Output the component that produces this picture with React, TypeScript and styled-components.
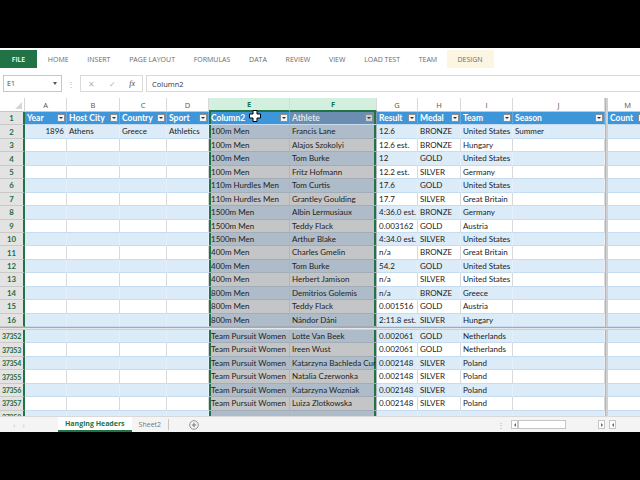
import React from 'react';
import styled, {createGlobalStyle} from 'styled-components';

const GREEN = '#217346';
const COLS = '25px 42px 53px 47px 42px 81px 87px 41px 43px 52px 92px 3px 40px';
const ROW_H = 13.45;

const GlobalStyle = createGlobalStyle`
    html, body {
        margin: 0;
        padding: 0;
        background: #000;
    }
    body {
        width: 640px;
        height: 480px;
        overflow: hidden;
        font-family: 'Lato', 'Open Sans', sans-serif;
    }
`;

const Screen = styled.div`
    width: 640px;
    height: 480px;
    display: flex;
    flex-direction: column;
    background: #000;
    overflow: hidden;
`;

const Letterbox = styled.div<{$h?: number}>`
    background: #000;
    flex: ${(p) => (p.$h ? `0 0 ${p.$h}px` : '1')};
`;

const Ribbon = styled.div`
    flex: 0 0 22px;
    background: #fff;
    display: flex;
    align-items: center;
    font-family: 'Open Sans', sans-serif;
    font-size: 7px;
    color: #6a6a6a;
`;

const RibbonTab = styled.div<{$file?: boolean, $context?: boolean}>`
    height: 18px;
    display: flex;
    align-items: center;
    justify-content: center;
    box-sizing: border-box;
    padding: 0 ${(p) => (p.$context ? 11 : 9.35)}px;
    width: ${(p) => (p.$file ? '37px' : 'auto')};
    background: ${(p) => (p.$file ? GREEN : p.$context ? '#fcf5e2' : 'transparent')};
    color: ${(p) => (p.$file ? '#fff' : '#6a6a6a')};
    font-weight: ${(p) => (p.$file ? 600 : 400)};
    margin-right: ${(p) => (p.$file ? '1.5px' : '0')};
`;

const FormulaRow = styled.div`
    flex: 0 0 28px;
    box-sizing: border-box;
    background: #fff;
    display: flex;
    align-items: flex-start;
    padding: 5px 0 0 3px;
    font-family: 'Open Sans', sans-serif;
    font-size: 7px;
    color: #444;
`;

const NameBox = styled.div`
    width: 59px;
    height: 17px;
    box-sizing: border-box;
    border: 1px solid #c6c6c6;
    display: flex;
    align-items: center;
    justify-content: space-between;
    padding: 0 4px 0 3px;
`;

const Caret = styled.span`
    width: 0;
    height: 0;
    border-left: 2.5px solid transparent;
    border-right: 2.5px solid transparent;
    border-top: 3px solid #555;
`;

const Grip = styled.div`
    width: 18px;
    height: 17px;
    display: flex;
    align-items: center;
    justify-content: center;
    color: #b0b0b0;
    font-size: 8px;
`;

const FxBox = styled.div`
    width: 63px;
    height: 17px;
    box-sizing: border-box;
    border: 1px solid #d9d9d9;
    display: flex;
    align-items: center;
    justify-content: space-around;
    color: #b5b5b5;
    font-size: 8px;
`;

const FxLabel = styled.span`
    font-family: 'Liberation Serif', serif;
    font-style: italic;
    color: #444;
    font-size: 8px;
`;

const FormulaInput = styled.div`
    flex: 1;
    margin-left: 3px;
    height: 17px;
    box-sizing: border-box;
    border: 1px solid #d9d9d9;
    border-right: none;
    padding-left: 5px;
    display: flex;
    align-items: center;
    color: #333;
    font-size: 7.5px;
`;

const Sheet = styled.div`
    position: relative;
    flex: 0 0 318px;
    background: #fff;
    overflow: hidden;
`;

const GridRow = styled.div<{$h?: number}>`
    display: grid;
    grid-template-columns: ${COLS};
    height: ${(p) => p.$h ?? ROW_H}px;
    overflow: hidden;
`;

const Corner = styled.div`
    position: relative;
    background: #fff;
    border-right: 1px solid #d4d4d4;
    border-bottom: 1px solid #c6c6c6;
    &::after {
        content: '';
        position: absolute;
        right: 2px;
        bottom: 2px;
        border-left: 7px solid transparent;
        border-bottom: 7px solid #d6d6d6;
    }
`;

const ColHead = styled.div<{$sel?: boolean}>`
    box-sizing: border-box;
    display: flex;
    align-items: center;
    justify-content: center;
    font-family: 'Open Sans', sans-serif;
    font-size: 7.5px;
    background: ${(p) => (p.$sel ? '#d3efdf' : '#fff')};
    color: ${(p) => (p.$sel ? GREEN : '#555')};
    font-weight: ${(p) => (p.$sel ? 700 : 400)};
    border-right: 1px solid #d9d9d9;
    border-bottom: ${(p) => (p.$sel ? `2px solid ${GREEN}` : '1px solid #c6c6c6')};
`;

const Split = styled.div`
    background: #d0d0d0;
    border-left: 1px solid #b5b5b5;
`;

const RowHead = styled.div<{$long?: boolean}>`
    box-sizing: border-box;
    display: flex;
    align-items: center;
    justify-content: center;
    background: #e3e3e3;
    color: #1d6b3e;
    font-weight: 700;
    font-size: ${(p) => (p.$long ? '7px' : '7.8px')};
    letter-spacing: ${(p) => (p.$long ? '-0.3px' : '0')};
    border-right: 2px solid ${GREEN};
    border-bottom: 1px solid #c9c9c9;
    overflow: hidden;
`;

type Tone = 'white' | 'band';

const Cell = styled.div<{$tone: Tone, $sel?: boolean, $right?: boolean, $edge?: 'left' | 'right'}>`
    box-sizing: border-box;
    padding: 0 2px;
    font-size: 8px;
    line-height: ${ROW_H - 1}px;
    color: #222;
    white-space: nowrap;
    overflow: hidden;
    text-overflow: clip;
    text-align: ${(p) => (p.$right ? 'right' : 'left')};
    background: ${(p) => {
        if (p.$sel) {
            return p.$tone === 'band' ? '#aebbc8' : '#c4c5c6';
        }
        return p.$tone === 'band' ? '#dcebf8' : '#fff';
    }};
    border-right: 1px solid ${(p) => {
        if (p.$sel) {
            return '#b0b6bc';
        }
        return p.$tone === 'band' ? '#e6f0fa' : '#d9d9d9';
    }};
    border-bottom: 1px solid ${(p) => (p.$sel ? '#a3adb8' : '#c6dcf0')};
    box-shadow: ${(p) => {
        if (p.$edge === 'left') {
            return `inset 2px 0 0 ${GREEN}`;
        }
        if (p.$edge === 'right') {
            return `inset -2px 0 0 ${GREEN}`;
        }
        return 'none';
    }};
`;

const HeadCell = styled.div<{$sel?: boolean, $edge?: 'left' | 'right'}>`
    box-sizing: border-box;
    display: flex;
    align-items: center;
    justify-content: space-between;
    padding: 0 1px 0 2px;
    font-size: 8.5px;
    font-weight: 700;
    white-space: nowrap;
    overflow: hidden;
    background: ${(p) => (p.$sel ? '#6a8db0' : '#3e96da')};
    color: ${(p) => (p.$sel ? '#dfe6ee' : '#fff')};
    border-right: 1px solid ${(p) => (p.$sel ? '#7b98b6' : '#62aae3')};
    border-bottom: 1px solid #c6dcf0;
    box-shadow: ${(p) => {
        if (p.$edge === 'left') {
            return `inset 2px 0 0 ${GREEN}`;
        }
        if (p.$edge === 'right') {
            return `inset -2px 0 0 ${GREEN}`;
        }
        return 'none';
    }};
`;

const FilterBtn = styled.span<{$dim?: boolean}>`
    flex: 0 0 8px;
    height: 8px;
    box-sizing: border-box;
    display: flex;
    align-items: center;
    justify-content: center;
    background: ${(p) => (p.$dim ? '#c6ccd3' : '#f3f3f3')};
    border: 1px solid #8d8d8d;
    margin-right: ${(p) => (p.$dim ? '2px' : '0')};
    &::after {
        content: '';
        border-left: 2px solid transparent;
        border-right: 2px solid transparent;
        border-top: 2.5px solid #333;
    }
`;

const HSplit = styled.div`
    height: 3px;
    box-sizing: border-box;
    background: #e6e6e6;
    border-top: 1px solid #a9a9a9;
    border-bottom: 1px solid #cfcfcf;
`;

const Cursor = styled.svg`
    position: absolute;
    left: 249px;
    top: 12px;
`;

const TabBar = styled.div`
    flex: 0 0 16px;
    box-sizing: border-box;
    background: #f4f4f4;
    border-top: 1px solid #d9d9d9;
    display: flex;
    align-items: stretch;
    font-family: 'Open Sans', sans-serif;
    font-size: 7px;
    color: #777;
`;

const NavArrows = styled.div`
    width: 58px;
    display: flex;
    align-items: center;
    gap: 7px;
    padding-left: 13px;
    box-sizing: border-box;
    color: #c4c4c4;
    font-size: 8px;
`;

const SheetTab = styled.div<{$active?: boolean}>`
    display: flex;
    align-items: center;
    padding: 0 7px;
    background: ${(p) => (p.$active ? '#fff' : 'transparent')};
    color: ${(p) => (p.$active ? GREEN : '#777')};
    font-weight: ${(p) => (p.$active ? 700 : 400)};
    border-bottom: ${(p) => (p.$active ? `2px solid ${GREEN}` : 'none')};
    border-right: ${(p) => (p.$active ? 'none' : '1px solid #c6c6c6')};
    margin: ${(p) => (p.$active ? '0' : '2px 0')};
`;

const AddSheet = styled.div`
    display: flex;
    align-items: center;
    margin-left: 20px;
`;

const TabSpacer = styled.div`
    flex: 1;
`;

const ScrollGrip = styled.div`
    display: flex;
    align-items: center;
    color: #aaa;
    font-size: 8px;
    margin-right: 6px;
`;

const HScroll = styled.div`
    width: 94px;
    display: flex;
    align-items: center;
`;

const ScrollArrow = styled.div<{$dir: 'left' | 'right'}>`
    width: 7px;
    height: 9px;
    box-sizing: border-box;
    border: 1px solid #c6c6c6;
    background: #fff;
    display: flex;
    align-items: center;
    justify-content: center;
    &::after {
        content: '';
        border-top: 2px solid transparent;
        border-bottom: 2px solid transparent;
        ${(p) => (p.$dir === 'left' ? 'border-right: 2px solid #666;' : 'border-left: 2px solid #666;')}
    }
`;

const ScrollTrack = styled.div`
    flex: 1;
    height: 9px;
    display: flex;
    align-items: center;
`;

const ScrollThumb = styled.div`
    width: 48px;
    height: 9px;
    box-sizing: border-box;
    border: 1px solid #c6c6c6;
    background: #fff;
`;

const TailScroll = styled.div`
    display: flex;
    align-items: center;
    margin-left: 4px;
    width: 31px;
`;

const TABS = ['HOME', 'INSERT', 'PAGE LAYOUT', 'FORMULAS', 'DATA', 'REVIEW', 'VIEW', 'LOAD TEST', 'TEAM'];
const LETTERS = ['A', 'B', 'C', 'D', 'E', 'F', 'G', 'H', 'I', 'J'];
const HEADERS = ['Year', 'Host City', 'Country', 'Sport', 'Column2', 'Athlete', 'Result', 'Medal', 'Team', 'Season'];

type Row = [string, string, string, string, string, string];

const TOP_ROWS: Row[] = [
    ['100m Men', 'Francis Lane', '12.6', 'BRONZE', 'United States', 'Summer'],
    ['100m Men', 'Alajos Szokolyi', '12.6 est.', 'BRONZE', 'Hungary', ''],
    ['100m Men', 'Tom Burke', '12', 'GOLD', 'United States', ''],
    ['100m Men', 'Fritz Hofmann', '12.2 est.', 'SILVER', 'Germany', ''],
    ['110m Hurdles Men', 'Tom Curtis', '17.6', 'GOLD', 'United States', ''],
    ['110m Hurdles Men', 'Grantley Goulding', '17.7', 'SILVER', 'Great Britain', ''],
    ['1500m Men', 'Albin Lermusiaux', '4:36.0 est.', 'BRONZE', 'Germany', ''],
    ['1500m Men', 'Teddy Flack', '0.003162', 'GOLD', 'Austria', ''],
    ['1500m Men', 'Arthur Blake', '4:34.0 est.', 'SILVER', 'United States', ''],
    ['400m Men', 'Charles Gmelin', 'n/a', 'BRONZE', 'Great Britain', ''],
    ['400m Men', 'Tom Burke', '54.2', 'GOLD', 'United States', ''],
    ['400m Men', 'Herbert Jamison', 'n/a', 'SILVER', 'United States', ''],
    ['800m Men', 'Demitrios Golemis', 'n/a', 'BRONZE', 'Greece', ''],
    ['800m Men', 'Teddy Flack', '0.001516', 'GOLD', 'Austria', ''],
    ['800m Men', 'Nándor Dáni', '2:11.8 est.', 'SILVER', 'Hungary', ''],
];

const BOTTOM_ROWS: Row[] = [
    ['Team Pursuit Women', 'Lotte Van Beek', '0.002061', 'GOLD', 'Netherlands', ''],
    ['Team Pursuit Women', 'Ireen Wust', '0.002061', 'GOLD', 'Netherlands', ''],
    ['Team Pursuit Women', 'Katarzyna Bachleda Cur', '0.002148', 'SILVER', 'Poland', ''],
    ['Team Pursuit Women', 'Natalia Czerwonka', '0.002148', 'SILVER', 'Poland', ''],
    ['Team Pursuit Women', 'Katarzyna Wozniak', '0.002148', 'SILVER', 'Poland', ''],
    ['Team Pursuit Women', 'Luiza Zlotkowska', '0.002148', 'SILVER', 'Poland', ''],
    ['', '', '', '', '', ''],
];

type DataRowProps = {
    label: string,
    tone: Tone,
    row: Row,
    first?: boolean,
}

const DataRow = ({label, tone, row, first}: DataRowProps) => {
    const [event, athlete, result, medal, team, season] = row;
    return (
        <GridRow>
            <RowHead $long={label.length > 2}>{label}</RowHead>
            <Cell $tone={tone} $right>{first ? '1896' : ''}</Cell>
            <Cell $tone={tone}>{first ? 'Athens' : ''}</Cell>
            <Cell $tone={tone}>{first ? 'Greece' : ''}</Cell>
            <Cell $tone={tone}>{first ? 'Athletics' : ''}</Cell>
            <Cell $tone={tone} $sel $edge='left'>{event}</Cell>
            <Cell $tone={tone} $sel $edge='right'>{athlete}</Cell>
            <Cell $tone={tone}>{result}</Cell>
            <Cell $tone={tone}>{medal}</Cell>
            <Cell $tone={tone}>{team}</Cell>
            <Cell $tone={tone}>{season}</Cell>
            <Split/>
            <Cell $tone={tone}/>
        </GridRow>
    );
};

const App = () => {
    return (
        <Screen>
            <GlobalStyle/>
            <Letterbox $h={48}/>
            <Ribbon>
                <RibbonTab $file>{'FILE'}</RibbonTab>
                {TABS.map((t) => <RibbonTab key={t}>{t}</RibbonTab>)}
                <RibbonTab $context>{'DESIGN'}</RibbonTab>
            </Ribbon>
            <FormulaRow>
                <NameBox><span>{'E1'}</span><Caret/></NameBox>
                <Grip>{'⋮'}</Grip>
                <FxBox>
                    <span>{'✕'}</span>
                    <span>{'✓'}</span>
                    <FxLabel>{'fx'}</FxLabel>
                </FxBox>
                <FormulaInput>{'Column2'}</FormulaInput>
            </FormulaRow>
            <Sheet>
                <GridRow $h={14}>
                    <Corner/>
                    {LETTERS.map((l) => (
                        <ColHead key={l} $sel={l === 'E' || l === 'F'}>{l}</ColHead>
                    ))}
                    <Split/>
                    <ColHead>{'M'}</ColHead>
                </GridRow>
                <GridRow>
                    <RowHead>{'1'}</RowHead>
                    {HEADERS.map((h) => (
                        <HeadCell
                            key={h}
                            $sel={h === 'Athlete'}
                            $edge={h === 'Column2' ? 'left' : h === 'Athlete' ? 'right' : undefined}
                        >
                            <span>{h}</span>
                            <FilterBtn $dim={h === 'Athlete'}/>
                        </HeadCell>
                    ))}
                    <Split/>
                    <HeadCell><span>{'Count'}</span><FilterBtn/></HeadCell>
                </GridRow>
                {TOP_ROWS.map((r, i) => (
                    <DataRow
                        key={i}
                        label={String(i + 2)}
                        tone={i % 2 === 0 ? 'band' : 'white'}
                        row={r}
                        first={i === 0}
                    />
                ))}
                <HSplit/>
                {BOTTOM_ROWS.map((r, i) => (
                    <DataRow
                        key={i}
                        label={String(37352 + i)}
                        tone={i % 2 === 0 ? 'band' : 'white'}
                        row={r}
                    />
                ))}
                <Cursor width='12' height='12' viewBox='0 0 12 12'>
                    <path
                        d='M4 0.5h4v3.5h3.5v4h-3.5v3.5h-4v-3.5h-3.5v-4h3.5z'
                        fill='#fff'
                        stroke='#000'
                        strokeWidth='1'
                    />
                </Cursor>
            </Sheet>
            <TabBar>
                <NavArrows><span>{'‹'}</span><span>{'›'}</span></NavArrows>
                <SheetTab $active>{'Hanging Headers'}</SheetTab>
                <SheetTab>{'Sheet2'}</SheetTab>
                <AddSheet>
                    <svg width='10' height='10' viewBox='0 0 10 10'>
                        <circle cx='5' cy='5' r='4.3' fill='none' stroke='#888' strokeWidth='0.9'/>
                        <path d='M5 2.8v4.4M2.8 5h4.4' stroke='#777' strokeWidth='1'/>
                    </svg>
                </AddSheet>
                <TabSpacer/>
                <ScrollGrip>{'⋮'}</ScrollGrip>
                <HScroll>
                    <ScrollArrow $dir='left'/>
                    <ScrollTrack><ScrollThumb/></ScrollTrack>
                    <ScrollArrow $dir='right'/>
                </HScroll>
                <TailScroll>
                    <ScrollArrow $dir='left'/>
                </TailScroll>
            </TabBar>
            <Letterbox/>
        </Screen>
    );
};

export default App;
